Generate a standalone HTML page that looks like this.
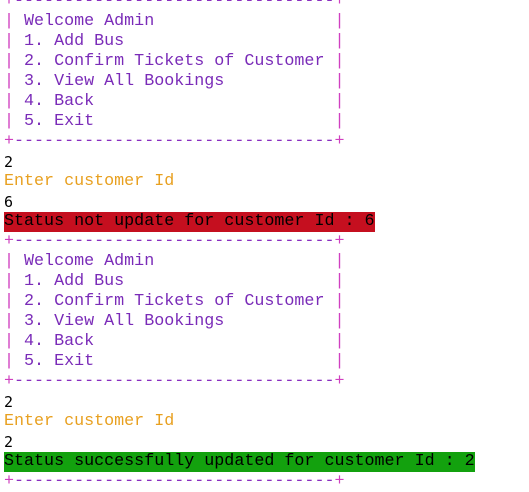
<html><head><style>
body{margin:0;background:#fff;width:529px;height:482px;overflow:hidden;position:relative}
pre{margin:0;position:absolute;top:-8px;left:4px;font:16.7px/20px "Liberation Mono",monospace;color:#7a2bb8;white-space:pre}
.b{color:#8a2fc0}.p{color:#d040c0}.n{color:#000;font-family:"DejaVu Sans Mono","Liberation Mono",monospace;font-size:15px}
.y{color:#e8a020}.r{background:#c50f1f;color:#000;display:inline-block;height:20px}.g{background:#13a10e;color:#000;display:inline-block;height:20px}
</style></head><body>
<pre><span class="p">+</span><span class="b">--------------------------------</span><span class="p">+</span>
<span class="p">|</span> Welcome Admin                  <span class="p">|</span>
<span class="p">|</span> 1. Add Bus                     <span class="p">|</span>
<span class="p">|</span> 2. Confirm Tickets of Customer <span class="p">|</span>
<span class="p">|</span> 3. View All Bookings           <span class="p">|</span>
<span class="p">|</span> 4. Back                        <span class="p">|</span>
<span class="p">|</span> 5. Exit                        <span class="p">|</span>
<span class="p">+</span><span class="b">--------------------------------</span><span class="p">+</span>
<span class="n">2</span>
<span class="y">Enter customer Id</span>
<span class="n">6</span>
<span class="r">Status not update for customer Id : 6</span>
<span class="p">+</span><span class="b">--------------------------------</span><span class="p">+</span>
<span class="p">|</span> Welcome Admin                  <span class="p">|</span>
<span class="p">|</span> 1. Add Bus                     <span class="p">|</span>
<span class="p">|</span> 2. Confirm Tickets of Customer <span class="p">|</span>
<span class="p">|</span> 3. View All Bookings           <span class="p">|</span>
<span class="p">|</span> 4. Back                        <span class="p">|</span>
<span class="p">|</span> 5. Exit                        <span class="p">|</span>
<span class="p">+</span><span class="b">--------------------------------</span><span class="p">+</span>
<span class="n">2</span>
<span class="y">Enter customer Id</span>
<span class="n">2</span>
<span class="g">Status successfully updated for customer Id : 2</span>
<span class="p">+</span><span class="b">--------------------------------</span><span class="p">+</span>
</pre></body></html>
